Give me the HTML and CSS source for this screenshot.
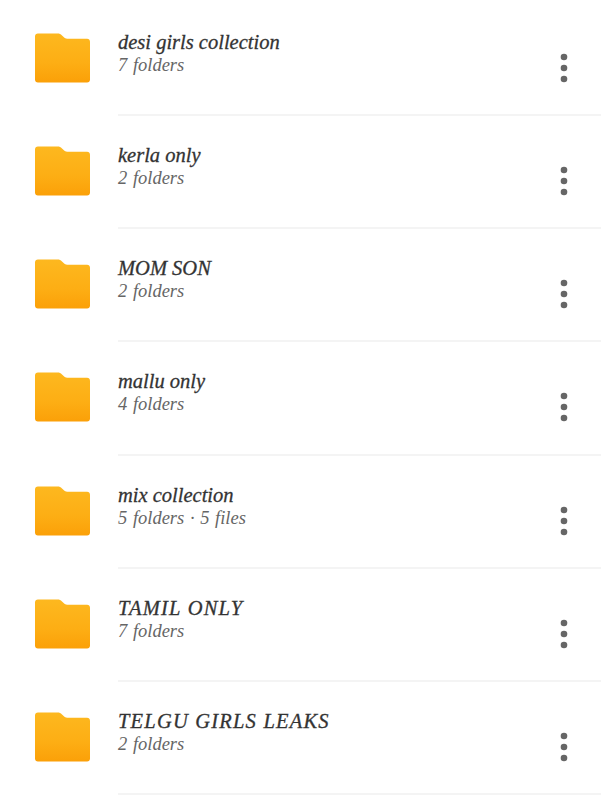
FILE: index.html
```html
<!DOCTYPE html>
<html lang="en">
<head>
    <meta charset="UTF-8">
    <title>Folders</title>
    <link rel="stylesheet" href="styles.css">
</head>
<body>
<svg width="0" height="0" class="defs">
    <defs>
        <linearGradient id="folderFill" x1="0" y1="0" x2="0" y2="1">
            <stop offset="0" stop-color="#fdb81f"/>
            <stop offset="0.6" stop-color="#fdae14"/>
            <stop offset="1" stop-color="#fba008"/>
        </linearGradient>
        <symbol id="folder" viewBox="0 0 56 50">
            <path fill="url(#folderFill)" d="M3 0H23C25 0 26 .6 27.500 2L30 4.500C31 5.200 32 5.500 33 5.500H53C54.800 5.500 56 6.700 56 8.500V47C56 48.800 54.800 50 53 50H3C1.200 50 0 48.800 0 47V3C0 1.200 1.200 0 3 0Z"/>
        </symbol>
        <symbol id="dots" viewBox="0 0 8 30">
            <circle cx="4" cy="4" r="3.300"/>
            <circle cx="4" cy="15" r="3.300"/>
            <circle cx="4" cy="26" r="3.300"/>
        </symbol>
    </defs>
</svg>
<ul class="folder-list">
    <li class="folder-row">
        <svg class="folder-icon"><use href="#folder"/></svg>
        <div class="folder-body">
            <div class="folder-text">
                <div class="folder-name">desi girls collection</div>
                <div class="folder-count">7 folders</div>
            </div>
            <svg class="more-icon"><use href="#dots"/></svg>
        </div>
    </li>
    <li class="folder-row">
        <svg class="folder-icon"><use href="#folder"/></svg>
        <div class="folder-body">
            <div class="folder-text">
                <div class="folder-name">kerla only</div>
                <div class="folder-count">2 folders</div>
            </div>
            <svg class="more-icon"><use href="#dots"/></svg>
        </div>
    </li>
    <li class="folder-row">
        <svg class="folder-icon"><use href="#folder"/></svg>
        <div class="folder-body">
            <div class="folder-text">
                <div class="folder-name">MOM SON</div>
                <div class="folder-count">2 folders</div>
            </div>
            <svg class="more-icon"><use href="#dots"/></svg>
        </div>
    </li>
    <li class="folder-row">
        <svg class="folder-icon"><use href="#folder"/></svg>
        <div class="folder-body">
            <div class="folder-text">
                <div class="folder-name">mallu only</div>
                <div class="folder-count">4 folders</div>
            </div>
            <svg class="more-icon"><use href="#dots"/></svg>
        </div>
    </li>
    <li class="folder-row">
        <svg class="folder-icon"><use href="#folder"/></svg>
        <div class="folder-body">
            <div class="folder-text">
                <div class="folder-name">mix collection</div>
                <div class="folder-count">5 folders · 5 files</div>
            </div>
            <svg class="more-icon"><use href="#dots"/></svg>
        </div>
    </li>
    <li class="folder-row">
        <svg class="folder-icon"><use href="#folder"/></svg>
        <div class="folder-body">
            <div class="folder-text">
                <div class="folder-name caps">TAMIL ONLY</div>
                <div class="folder-count">7 folders</div>
            </div>
            <svg class="more-icon"><use href="#dots"/></svg>
        </div>
    </li>
    <li class="folder-row">
        <svg class="folder-icon"><use href="#folder"/></svg>
        <div class="folder-body">
            <div class="folder-text">
                <div class="folder-name caps">TELGU GIRLS LEAKS</div>
                <div class="folder-count">2 folders</div>
            </div>
            <svg class="more-icon"><use href="#dots"/></svg>
        </div>
    </li>
</ul>
</body>
</html>
```
FILE: styles.css
```css
html, body {margin: 0; padding: 0; background: #fff; overflow: hidden;}
body {font-family: "Liberation Serif", serif; font-style: italic;}
.defs {display: block; height: 0;}

.folder-list {list-style: none; margin: 0; padding: 3px 7px 0 35px;}
.folder-row {display: flex; height: 113.170px; box-sizing: border-box;}
.folder-icon {flex: none; width: 55px; height: 50px; margin: 30px 28px 0 0;}

.folder-body {flex: 1; display: flex; justify-content: space-between; border-bottom: 2px solid #f4f4f4;}
.folder-text {padding-top: 26px;}
.folder-name {font-size: 20.500px; line-height: 26px; color: #333; -webkit-text-stroke: 0.3px #333;}
.folder-name.caps {letter-spacing: 1.200px;}
.folder-count {font-size: 18.500px; line-height: 21px; color: #666; word-spacing: 1px;}

.more-icon {flex: none; width: 8px; height: 30px; margin: 50px 33px 0 0; fill: #666;}
```
